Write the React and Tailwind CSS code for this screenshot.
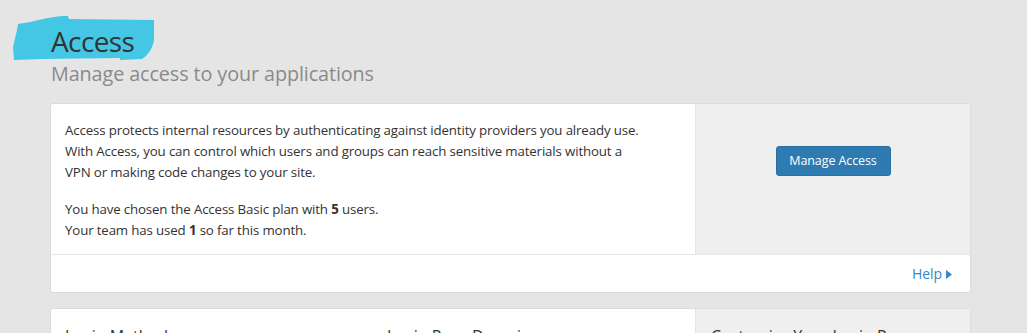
import React from 'react';

function Highlight() {
    // Marker scribble behind the page title
    return (
        <svg className="absolute left-[-38px] top-[15px]" width="144" height="46" viewBox="0 0 144 46">
            <path
                d="M5 15 L6 9 L18 7 C30 4 40 2 50 1 L56 1 L57 4 L142 5 L142 25 C141 31 138 39 130 44 L108 45 L108 43 L30 44 L2 45 L1 32 Z"
                fill="#43c7e5"
            />
        </svg>
    );
}

function Header() {
    return (
        <div className="relative pt-[21px]">
            <Highlight />
            <h1 className="relative pl-[1px] text-[28px] leading-[40px] text-[#333] font-normal tracking-[-0.6px]">Access</h1>
            <p className="pl-[1px] text-[19.8px] leading-[28px] text-[#8a8a8a] mt-[-1px] tracking-[-0.1px]">Manage access to your applications</p>
        </div>
    );
}

function AccessCard() {
    return (
        <div className="mt-[15px] bg-white border border-[#dcdcdc] rounded-[3px]">
            <div className="flex h-[151px] border-b border-[#e8e8e8]">
                <div className="w-[644px] px-[14px] pt-[16px] text-[13.3px] leading-[21px] text-[#333] tracking-[-0.15px]">
                    <p>
                        Access protects internal resources by authenticating against identity providers you already use.
                        <br />
                        With Access, you can control which users and groups can reach sensitive materials without a
                        <br />
                        VPN or making code changes to your site.
                    </p>
                    <p className="mt-[16px]">
                        You have chosen the Access Basic plan with <b className="font-bold">5</b> users.
                        <br />
                        Your team has used <b className="font-bold">1</b> so far this month.
                    </p>
                </div>
                <div className="flex-1 bg-[#efefef] border-l border-[#e4e4e4] flex justify-center items-start pt-[42px]">
                    <button
                        type="button"
                        className="h-[30px] w-[115px] bg-[#2d7bb1] border border-[#2a6fa0] rounded-[3px] text-white text-[12.5px] tracking-[-0.1px]"
                    >
                        Manage Access
                    </button>
                </div>
            </div>
            <div className="h-[37px] flex items-center justify-end pr-[18px]">
                <a className="flex items-center text-[14px] text-[#3d86c0] tracking-[-0.1px]">
                    Help
                    <svg width="6" height="9" viewBox="0 0 6 9" className="ml-[4px] mt-[1px]">
                        <path d="M0 0 L6 4.5 L0 9 Z" fill="#3d86c0" />
                    </svg>
                </a>
            </div>
        </div>
    );
}

function LoginCard() {
    return (
        <div className="mt-[15px] bg-white border border-[#dcdcdc] rounded-[3px] flex h-[60px] text-[16px] leading-[24px] text-[#333]">
            <div className="w-[644px] flex">
                <div className="w-[322px] pl-[14px] pt-[15px]">Login Methods</div>
                <div className="w-[322px] pl-[14px] pt-[15px]">Login Page Domain</div>
            </div>
            <div className="flex-1 bg-[#efefef] border-l border-[#e4e4e4] pl-[15px] pt-[15px]">
                Customize Your Login Page
            </div>
        </div>
    );
}

export default function App() {
    return (
        <div className="w-[1027px] h-[333px] overflow-hidden bg-[#e5e5e5] font-['Open_Sans',sans-serif]">
            <div className="ml-[50px] w-[921px]">
                <Header />
                <AccessCard />
                <LoginCard />
            </div>
        </div>
    );
}
